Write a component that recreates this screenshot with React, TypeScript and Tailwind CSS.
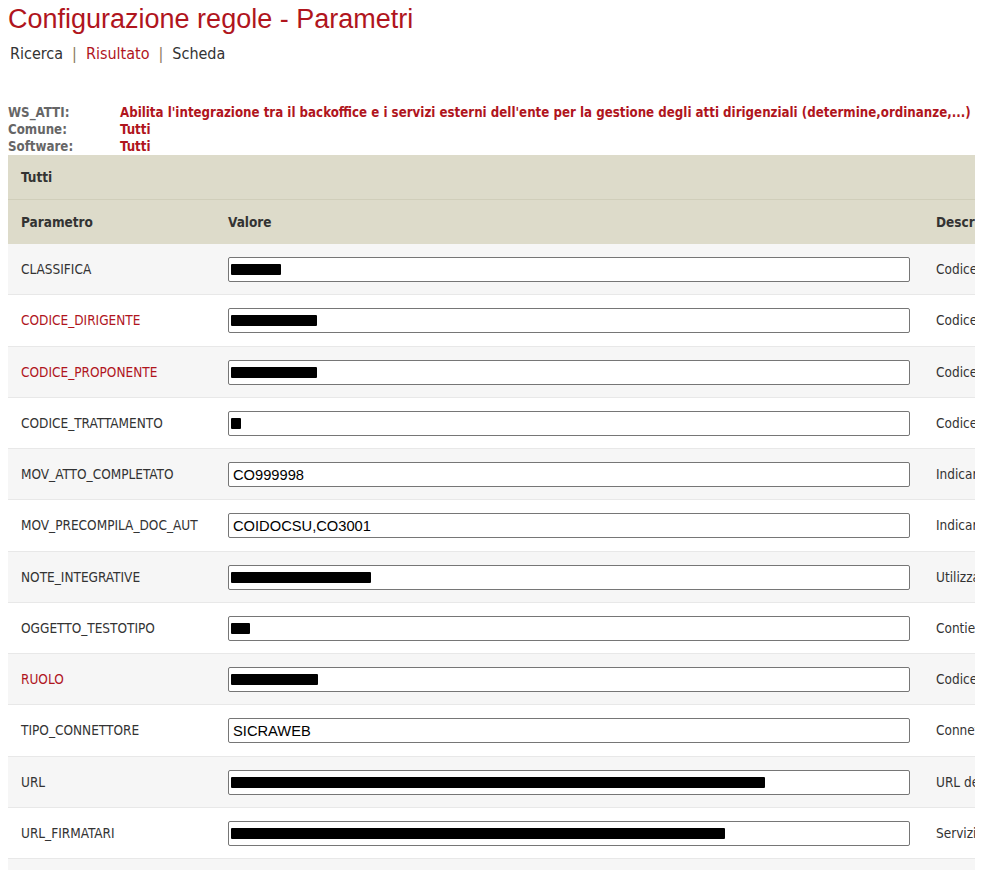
const RED = "text-[#b0151d]";

type Row = {
  name: string;
  red?: boolean;
  value?: string;
  mask?: number;
  desc: string;
};

const rows: Row[] = [
  { name: "CLASSIFICA", mask: 50, desc: "Codice classifica da utilizzare per gli atti" },
  { name: "CODICE_DIRIGENTE", red: true, mask: 86, desc: "Codice del dirigente" },
  { name: "CODICE_PROPONENTE", red: true, mask: 86, desc: "Codice del proponente" },
  { name: "CODICE_TRATTAMENTO", mask: 10, desc: "Codice trattamento" },
  { name: "MOV_ATTO_COMPLETATO", value: "CO999998", desc: "Indicare il movimento di atto completato" },
  { name: "MOV_PRECOMPILA_DOC_AUT", value: "COIDOCSU,CO3001", desc: "Indicare i movimenti da precompilare" },
  { name: "NOTE_INTEGRATIVE", mask: 140, desc: "Utilizzato per le note integrative" },
  { name: "OGGETTO_TESTOTIPO", mask: 19, desc: "Contiene l'oggetto del testo tipo" },
  { name: "RUOLO", red: true, mask: 87, desc: "Codice ruolo" },
  { name: "TIPO_CONNETTORE", value: "SICRAWEB", desc: "Connettore utilizzato" },
  { name: "URL", mask: 534, desc: "URL del servizio" },
  { name: "URL_FIRMATARI", mask: 494, desc: "Servizio per i firmatari" },
];

function ValueBox({ row }: { row: Row }) {
  return (
    <div className="w-[682px] h-[25px] border border-[#767676] rounded-[2px] bg-white flex items-center pl-[4px] font-['Liberation_Sans',Arial,sans-serif] text-[14.7px] text-black">
      {row.value ? (
        row.value
      ) : (
        <span
          className="block h-[11px] bg-black rounded-[1px] -ml-[2px]"
          style={{ width: row.mask }}
        />
      )}
    </div>
  );
}

export default function App() {
  return (
    <div className="min-h-[870px] bg-white font-['DejaVu_Sans_Condensed','Liberation_Sans',Tahoma,sans-serif] text-[13.5px] text-[#333]">
      <h1 className={`pl-[8px] pt-[3px] font-['Liberation_Sans',Arial,sans-serif] text-[27px] leading-[32px] ${RED}`}>
        Configurazione regole - Parametri
      </h1>
      <nav className="pl-[10px] mt-[9px] text-[16px] leading-[20px] flex gap-[9px]">
        <span>Ricerca</span>
        <span className="text-[#8a7a60]">|</span>
        <span className={RED}>Risultato</span>
        <span className="text-[#8a7a60]">|</span>
        <span>Scheda</span>
      </nav>

      <div className="mt-[40px] pl-[8px] font-bold text-[13.2px] leading-[17px]">
        <div className="flex">
          <span className="w-[112px] text-[#666]">WS_ATTI:</span>
          <span className={RED}>
            Abilita l'integrazione tra il backoffice e i servizi esterni dell'ente per la gestione degli atti dirigenziali (determine,ordinanze,...)
          </span>
        </div>
        <div className="flex">
          <span className="w-[112px] text-[#666]">Comune:</span>
          <span className={RED}>Tutti</span>
        </div>
        <div className="flex">
          <span className="w-[112px] text-[#666]">Software:</span>
          <span className={RED}>Tutti</span>
        </div>
      </div>

      <div className="ml-[8px] w-[967px] overflow-hidden">
        <div className="w-[1300px]">
          <div className="h-[45px] bg-[#dddbca] border-b border-[#d0ceba] flex items-center pl-[13px] font-bold">
            Tutti
          </div>
          <div className="h-[44px] bg-[#dddbca] flex items-center font-bold">
            <div className="w-[207px] pl-[13px]">Parametro</div>
            <div className="w-[708px] pl-[13px]">Valore</div>
            <div className="pl-[13px]">Descrizione</div>
          </div>
          {rows.map((r, i) => (
            <div
              key={r.name}
              className={`h-[51.25px] flex items-center border-b border-[#e8e8e8] ${
                i % 2 === 0 ? "bg-[#f6f6f6]" : "bg-white"
              }`}
            >
              <div className={`w-[207px] pl-[13px] ${r.red ? RED : ""}`}>{r.name}</div>
              <div className="w-[708px] pl-[13px] pt-[1px]">
                <ValueBox row={r} />
              </div>
              <div className="pl-[13px] whitespace-nowrap">{r.desc}</div>
            </div>
          ))}
          <div className="h-[20px] bg-[#f6f6f6]" />
        </div>
      </div>
    </div>
  );
}
